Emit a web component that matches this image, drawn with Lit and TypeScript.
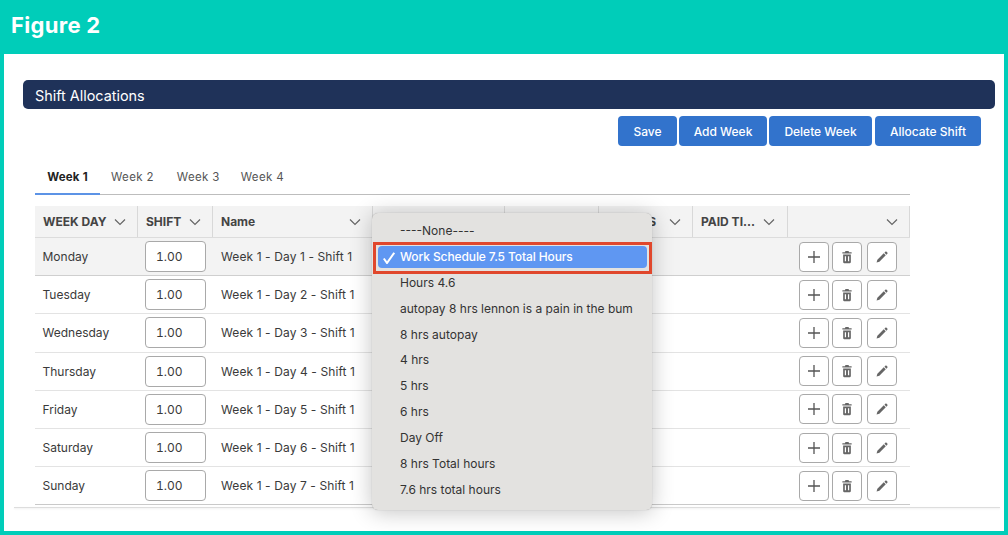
import { LitElement, html, css, svg } from "lit";
import { customElement } from "lit/decorators.js";

const days = ["Monday", "Tuesday", "Wednesday", "Thursday", "Friday", "Saturday", "Sunday"];
const headers = ["WEEK DAY", "SHIFT", "Name", "", "", "HOURS", "PAID TI...", ""];
const options = ["----None----", "Work Schedule 7.5 Total Hours", "Hours 4.6", "autopay 8 hrs lennon is a pain in the bum", "8 hrs autopay", "4 hrs", "5 hrs", "6 hrs", "Day Off", "8 hrs Total hours", "7.6 hrs total hours"];

const chevron = svg`<path d="M1 1.5 6 6.5 11 1.5" fill="none" stroke="#666" stroke-width="1.2"/>`;

@customElement("app-root")
export class AppRoot extends LitElement {
  static styles = css`
    :host { display: block; width: 1008px; height: 535px; background: #00cdb9; overflow: hidden; font-family: Inter, "Liberation Sans", sans-serif; color: #333; font-size: 12px; }
    .figure { height: 54px; box-sizing: border-box; padding: 12px 0 0 11px; color: #fff; font: 700 22px/26px Inter, "Liberation Sans", sans-serif; letter-spacing: .3px; }
    main { position: relative; height: 477px; margin: 0 4px; box-sizing: border-box; background: #fff; padding-top: 26px; }
    .bar { height: 29px; margin: 0 9px 0 19px; box-sizing: border-box; padding-left: 12px; background: #1f3259; border-radius: 5px; color: #fff; font-size: 14.4px; line-height: 31px; }
    .actions { display: flex; justify-content: flex-end; gap: 2px; margin: 7px 23px 0 0; }
    .actions button { height: 30px; border: 0; border-radius: 4px; background: #3273cc; color: #fff; font: 500 12px Inter, "Liberation Sans", sans-serif; padding: 0; }
    .save { width: 59px; } .add { width: 88px; } .del { width: 103px; } .alloc { width: 106px; margin-left: 1px; }
    .wrap { width: 875px; margin: 18px 0 0 31px; }
    .tabs { display: flex; height: 30px; border-bottom: 1px solid #bdbdbd; box-sizing: content-box; }
    .tab { box-sizing: border-box; height: 31px; line-height: 26px; color: #555; font-size: 11.5px; letter-spacing: .35px; white-space: nowrap; }
    .tab.first { width: 65px; text-align: center; color: #222; font-weight: 700; letter-spacing: .2px; border-bottom: 2px solid #5c93e6; }
    .tab.w2 { margin-left: 11px; } .tab.w3 { margin-left: 23px; } .tab.w4 { margin-left: 21px; }
    .head, .row { display: grid; grid-template-columns: 103px 75px 160px 132px 94px 94px 95px 122px; }
    .head { height: 31px; margin-top: 11px; background: #f3f3f3; border-bottom: 1px solid #dcdcdc; }
    .hc { display: flex; align-items: center; justify-content: space-between; padding: 0 11px 0 8px; border-right: 1px solid #d8d8d8; font-weight: 700; color: #444; white-space: nowrap; font-size: 12px; }
    .hc svg { width: 12px; height: 8px; flex: none; }
    .hc.hours { justify-content: flex-end; gap: 13px; }
    .hc.paid { padding-right: 12px; }
    .row { height: 38.2px; box-sizing: border-box; border-bottom: 1px solid #e3e3e3; align-items: center; color: #3a3a3a; }
    .row.sel { background: #f3f3f3; border-bottom-color: #cfcfcf; }
    .row.last { border-bottom-color: #c9c9c9; }
    .day { padding-left: 7.5px; }
    .qty { box-sizing: border-box; width: 61px; height: 31px; margin-left: 7px; border: 1px solid #a9a9a9; border-radius: 4px; background: #fff; padding-left: 10px; line-height: 29px; font-variant-numeric: tabular-nums; }
    .nm { padding-left: 8px; white-space: nowrap; letter-spacing: .1px; }
    .tools { display: flex; grid-column: 8; padding-left: 11px; }
    .tool { box-sizing: border-box; width: 30px; height: 30px; border: 1px solid #a9a9a9; border-radius: 4px; background: #fff; display: flex; align-items: center; justify-content: center; margin-right: 3px; }
    .tool.edit { margin-left: 2px; }
    .tool svg { width: 14px; height: 14px; }
    .tool.plus svg { width: 16px; height: 16px; }
    .rule { position: absolute; left: 10px; right: 4px; top: 453px; height: 1px; background: #dddddd; box-shadow: 0 1px 2px rgba(0,0,0,.08); }
    .menu { position: absolute; left: 368px; top: 159px; width: 280px; height: 297px; box-sizing: border-box; padding-top: 5px; background: #e3e2e0; border-radius: 6px; box-shadow: 0 2px 22px rgba(0,0,0,.24), 0 0 1px rgba(0,0,0,.3); color: #333; }
    .opt { height: 25.9px; line-height: 26px; padding-left: 28px; white-space: nowrap; }
    .opt.on { position: relative; color: #fff; font-weight: 500; letter-spacing: -.1px; }
    .opt.on::before { content: ""; position: absolute; z-index: 0; left: 6px; right: 5px; top: 2px; height: 22px; background: #5f97f2; border-radius: 4px; }
    .opt.on span { position: relative; }
    .opt.on svg { position: absolute; left: 11px; top: 8px; width: 12px; height: 12px; }
    .mark { position: absolute; left: 369px; top: 188px; width: 279px; height: 32px; box-sizing: border-box; border: 3px solid #e0472c; }
  `;

  render() {
    return html`
      <div class="figure">Figure 2</div>
      <main>
        <div class="bar">Shift Allocations</div>
        <div class="actions">
          <button class="save">Save</button><button class="add">Add Week</button><button class="del">Delete Week</button><button class="alloc">Allocate Shift</button>
        </div>
        <div class="wrap">
          <div class="tabs">
            <div class="tab first">Week 1</div>
            <div class="tab w2">Week 2</div>
            <div class="tab w3">Week 3</div>
            <div class="tab w4">Week 4</div>
          </div>
          <div class="head">
            ${headers.map((h, i) => html`<div class="hc ${i === 5 ? "hours" : ""} ${i === 6 ? "paid" : ""}"><span>${h}</span><svg viewBox="0 0 12 8">${chevron}</svg></div>`)}
          </div>
          ${days.map((d, i) => html`
            <div class="row ${i === 0 ? "sel" : ""} ${i === 6 ? "last" : ""}">
              <div class="day">${d}</div>
              <div class="qty">1.00</div>
              <div class="nm">Week 1 - Day ${i + 1} - Shift 1</div>
              <div class="tools">
                <div class="tool plus"><svg viewBox="0 0 16 16"><path d="M8 2v12M2 8h12" stroke="#555" stroke-width="1.3" fill="none"/></svg></div>
                <div class="tool"><svg viewBox="0 0 16 16"><path fill="#666" fill-rule="evenodd" d="M6.2 1h3.6l.5 1.5h3v1.4H2.7V2.5h3zM3.6 5h8.8v8.8c0 .7-.5 1.2-1.1 1.2H4.7c-.6 0-1.100-.5-1.100-1.200zM5.5 7v5.8h1.400V7zm3.600 0v5.800h1.400V7z"/></svg></div>
                <div class="tool edit"><svg viewBox="0 0 16 16"><path fill="#666" d="M1.800 14.200l.9-3.200 7.300-7.300 2.300 2.300-7.300 7.300zM10.800 3l1-1c.4-.4 1-.4 1.400 0l.9.9c.4.4.4 1 0 1.400l-1 1z"/></svg></div>
              </div>
            </div>`)}
        </div>
        <div class="rule"></div>
        <div class="menu">
          ${options.map((o, i) => i === 1
            ? html`<div class="opt on"><span>${o}</span><svg viewBox="0 0 12 12"><path d="M.8 6.500 4 11 11.200 .8" fill="none" stroke="#fff" stroke-width="2"/></svg></div>`
            : html`<div class="opt">${o}</div>`)}
        </div>
        <div class="mark"></div>
      </main>
    `;
  }
}
